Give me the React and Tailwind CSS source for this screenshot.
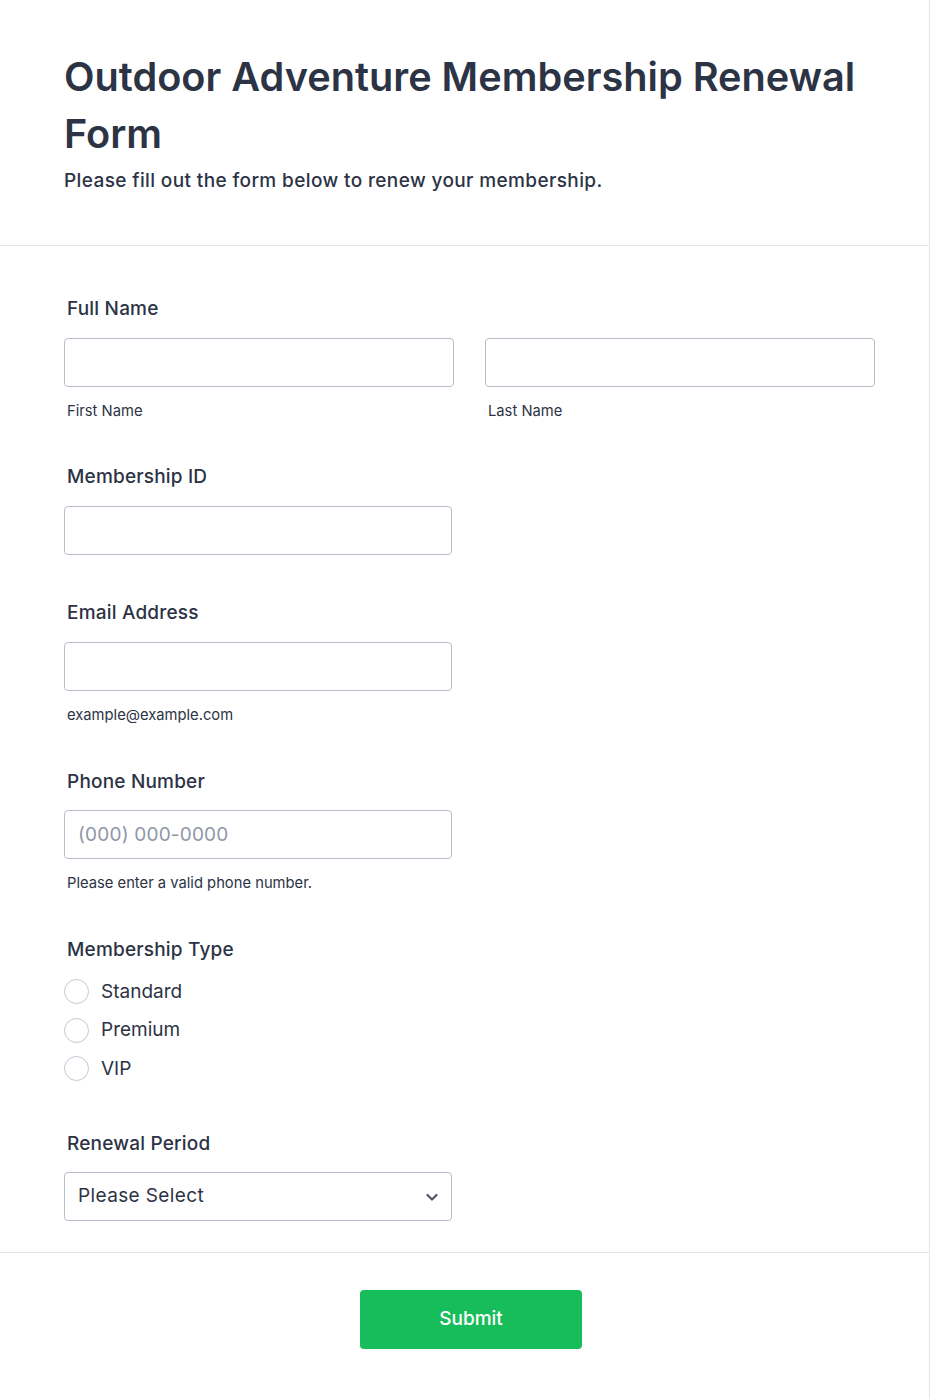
import React from "react";

const font = { fontFamily: "Inter, 'Noto Sans', sans-serif" };

function Label({ children }) {
  return <div className="text-[19px] font-medium tracking-[0.01em] leading-[24px] text-[#2c3345] pl-[3px]">{children}</div>;
}

function TextInput({ placeholder, className = "" }) {
  return (
    <input
      type="text"
      placeholder={placeholder}
      className={`h-[49px] rounded-[4px] border border-[#b8bdc9] bg-white px-[13px] text-[19px] tracking-[0.01em] text-[#2c3345] placeholder:text-[#8f96a8] outline-none ${className}`}
    />
  );
}

function Sub({ children }) {
  return <div className="mt-[15px] pl-[3px] text-[14.75px] leading-[18px] text-[#2c3345]">{children}</div>;
}

export default function App() {
  return (
    <div className="min-h-[1399px] bg-white border-r border-[#e3e5ed]" style={font}>
      <header className="px-[64px] pt-[49px] pb-[51px] border-b border-[#e3e5ed]">
        <h1 className="text-[39.7px] font-semibold leading-[57px] text-[#2c3345]">
          Outdoor Adventure Membership Renewal Form
        </h1>
        <p className="mt-[5px] text-[19px] font-medium tracking-[0.02em] leading-[26px] text-[#2c3345]">
          Please fill out the form below to renew your membership.
        </p>
      </header>

      <main className="px-[64px] pt-[51px] pb-[31px]">
        <section>
          <Label>Full Name</Label>
          <div className="mt-[17px] grid grid-cols-2 gap-[31px] w-[811px]">
            <div className="flex flex-col">
              <TextInput className="w-full" />
              <Sub>First Name</Sub>
            </div>
            <div className="flex flex-col">
              <TextInput className="w-full" />
              <Sub>Last Name</Sub>
            </div>
          </div>
        </section>

        <section className="mt-[45px]">
          <Label>Membership ID</Label>
          <div className="mt-[17px]">
            <TextInput className="w-[388px]" />
          </div>
        </section>

        <section className="mt-[46px]">
          <Label>Email Address</Label>
          <div className="mt-[17px] flex flex-col">
            <TextInput className="w-[388px]" />
            <Sub>example@example.com</Sub>
          </div>
        </section>

        <section className="mt-[46px]">
          <Label>Phone Number</Label>
          <div className="mt-[16px] flex flex-col">
            <TextInput className="w-[388px]" placeholder="(000) 000-0000" />
            <Sub>Please enter a valid phone number.</Sub>
          </div>
        </section>

        <section className="mt-[46px]">
          <Label>Membership Type</Label>
          <div className="mt-[17px] flex flex-col gap-[13.5px]">
            {["Standard", "Premium", "VIP"].map((o) => (
              <label key={o} className="flex items-center gap-[12px] h-[25px]">
                <span className="w-[25px] h-[25px] rounded-full border border-[#c3c8d4] bg-white" />
                <span className="text-[19px] text-[#2c3345] leading-[24px]">{o}</span>
              </label>
            ))}
          </div>
        </section>

        <section className="mt-[51px]">
          <Label>Renewal Period</Label>
          <div className="mt-[16px] relative w-[388px] h-[49px] rounded-[4px] border border-[#b8bdc9] bg-white flex items-center px-[13px]">
            <span className="text-[19px] tracking-[0.02em] text-[#2c3345]">Please Select</span>
            <svg className="absolute right-[12px] top-1/2 -translate-y-1/2" width="14" height="10" viewBox="0 0 14 10" fill="none">
              <path d="M2.5 3l4.5 4.5L11.5 3" stroke="#4b5468" strokeWidth="2.2" strokeLinecap="round" strokeLinejoin="round" />
            </svg>
          </div>
        </section>
      </main>

      <footer className="border-t border-[#e3e5ed] flex justify-center pt-[37px] pb-[50px]">
        <button className="ml-[13px] w-[222px] h-[59px] rounded-[4px] bg-[#18bd5b] text-white text-[19px] font-medium">
          Submit
        </button>
      </footer>
    </div>
  );
}
